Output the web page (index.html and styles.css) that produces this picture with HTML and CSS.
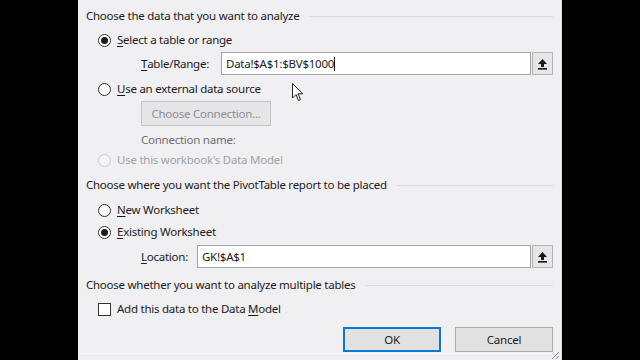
FILE: index.html
```html
<!DOCTYPE html>
<html>
<head>
<meta charset="utf-8">
<link rel="stylesheet" href="styles.css">
</head>
<body>
<div class="dialog">
  <div class="group-head h1"><span>Choose the data that you want to analyze</span><i class="rule"></i></div>
  <div class="opt r1"><span class="radio checked"></span><span><u>S</u>elect a table or range</span></div>
  <div class="field f1">
    <span class="flabel w-table"><u>T</u>able/Range:</span>
    <div class="input"><span class="val">Data!$A$1:$BV$1000</span><span class="caret"></span></div>
    <span class="pick"><svg width="11" height="12" viewBox="0 0 11 12"><path d="M5.5 1 L10 6 H7 V9 H4 V6 H1 Z" fill="#1a1a1a"/><rect x="1" y="10" width="9" height="1.6" fill="#1a1a1a"/></svg></span>
  </div>
  <div class="opt r2"><span class="radio"></span><span><u>U</u>se an external data source</span></div>
  <div class="conn-btn-row"><span class="btn disabled conn">Choose Connection...</span></div>
  <div class="conn-name">Connection name:</div>
  <div class="opt r3 dim"><span class="radio off"></span><span>Use this workbook's Data Model</span></div>

  <div class="group-head h2"><span>Choose where you want the PivotTable report to be placed</span><i class="rule"></i></div>
  <div class="opt r4"><span class="radio"></span><span><u>N</u>ew Worksheet</span></div>
  <div class="opt r5"><span class="radio checked"></span><span><u>E</u>xisting Worksheet</span></div>
  <div class="field f2">
    <span class="flabel w-loc"><u>L</u>ocation:</span>
    <div class="input"><span class="val">GK!$A$1</span></div>
    <span class="pick"><svg width="11" height="12" viewBox="0 0 11 12"><path d="M5.5 1 L10 6 H7 V9 H4 V6 H1 Z" fill="#1a1a1a"/><rect x="1" y="10" width="9" height="1.6" fill="#1a1a1a"/></svg></span>
  </div>

  <div class="group-head h3"><span>Choose whether you want to analyze multiple tables</span><i class="rule"></i></div>
  <div class="opt r6"><span class="check"></span><span>Add this data to the Data <u>M</u>odel</span></div>

  <div class="actions">
    <span class="btn ok">OK</span>
    <span class="btn">Cancel</span>
  </div>
  <div class="bottom-line"></div>
  <svg class="grip" width="10" height="10" viewBox="0 0 10 10"><path d="M9 2 L2 9 M9 6 L6 9" stroke="#8a8a8a" stroke-width="1"/></svg>
  <svg class="cursor" width="12" height="19" viewBox="0 0 12 19"><path d="M0.5 0.5 V15 L4 11.5 L6.5 17.5 L8.5 16.6 L6 10.8 H10.8 Z" fill="#fff" stroke="#222" stroke-width="1" stroke-linejoin="round"/></svg>
</div>
</body>
</html>
```
FILE: styles.css
```css
html, body {
  margin: 0;
  padding: 0;
  background: #000;
  width: 640px;
  height: 360px;
  overflow: hidden;
}
.dialog {
  position: relative;
  margin-left: 78px;
  width: 484px;
  height: 360px;
  box-sizing: border-box;
  background: #f0eff1;
  padding: 6px 8px 0 8px;
  font-family: "Noto Sans", "Open Sans", sans-serif;
  font-size: 11.5px;
  letter-spacing: -0.25px;
  color: #1b1b1b;
  display: flex;
  flex-direction: column;
  border-right: 1px solid #dedde0;
}
u { text-decoration: underline; text-underline-offset: 2px; }
.group-head {
  height: 20px;
  line-height: 20px;
  display: flex;
  align-items: center;
  gap: 10px;
  white-space: nowrap;
}
.rule {
  flex: 1;
  height: 1px;
  background: #dcdcde;
}
.h2 { margin-top: 5px; }
.h3 { margin-top: 7px; }
.opt {
  height: 20px;
  line-height: 20px;
  display: flex;
  align-items: center;
  gap: 6px;
  padding-left: 12px;
}
.r1 { margin-top: 4px; }
.r2 { margin-top: 4px; }
.r4 { margin-top: 5px; }
.r5 { margin-top: 2px; }
.r6 { margin-top: 4px; }
.radio {
  width: 13px;
  height: 13px;
  box-sizing: border-box;
  border: 1px solid #333;
  border-radius: 50%;
  background: #fff;
  display: inline-flex;
  align-items: center;
  justify-content: center;
  flex: none;
}
.radio.checked::after {
  content: "";
  width: 7px;
  height: 7px;
  border-radius: 50%;
  background: #1b1b1b;
}
.radio.off { border-color: #c8c8ca; background: #f4f4f5; }
.dim { color: #a3a2a6; }
.check {
  width: 13px;
  height: 13px;
  box-sizing: border-box;
  border: 1px solid #333;
  background: #fff;
  flex: none;
}
.field {
  height: 23px;
  display: flex;
  align-items: stretch;
  padding-left: 55px;
}
.f1 { margin-top: 2px; }
.f2 { margin-top: 3px; }
.flabel {
  display: flex;
  align-items: center;
}
.w-table { width: 80px; }
.w-loc { width: 56px; }
.input {
  flex: 1;
  background: #fff;
  border: 1px solid #a2a2a4;
  box-sizing: border-box;
  display: flex;
  align-items: center;
  padding-left: 4px;
}
.caret {
  width: 1px;
  height: 14px;
  background: #111;
}
.pick {
  width: 21px;
  margin-left: 1px;
  box-sizing: border-box;
  border: 1px solid #b4b4b6;
  background: #e6e6e8;
  display: flex;
  align-items: center;
  justify-content: center;
}
.conn-btn-row {
  margin-top: 2px;
  padding-left: 55px;
  display: flex;
}
.btn {
  height: 25px;
  box-sizing: border-box;
  border: 1px solid #adadad;
  background: #e1e1e1;
  display: flex;
  align-items: center;
  justify-content: center;
  width: 98px;
}
.btn.conn {
  width: 130px;
  color: #8e8d91;
  border-color: #c4c4c6;
  background: #e6e5e8;
}
.conn-name {
  margin-top: 4px;
  height: 20px;
  line-height: 20px;
  padding-left: 55px;
  color: #6f6e73;
}
.actions {
  margin-top: 8px;
  display: flex;
  justify-content: flex-end;
  gap: 14px;
}
.btn.ok {
  border: 2px solid #0a78d4;
}
.bottom-line {
  position: absolute;
  left: 0;
  right: 0;
  bottom: 6px;
  height: 1px;
  background: #f8f8f9;
}
.grip {
  position: absolute;
  right: 1px;
  bottom: 0;
}
.cursor {
  position: absolute;
  left: 214px;
  top: 83px;
}
```
